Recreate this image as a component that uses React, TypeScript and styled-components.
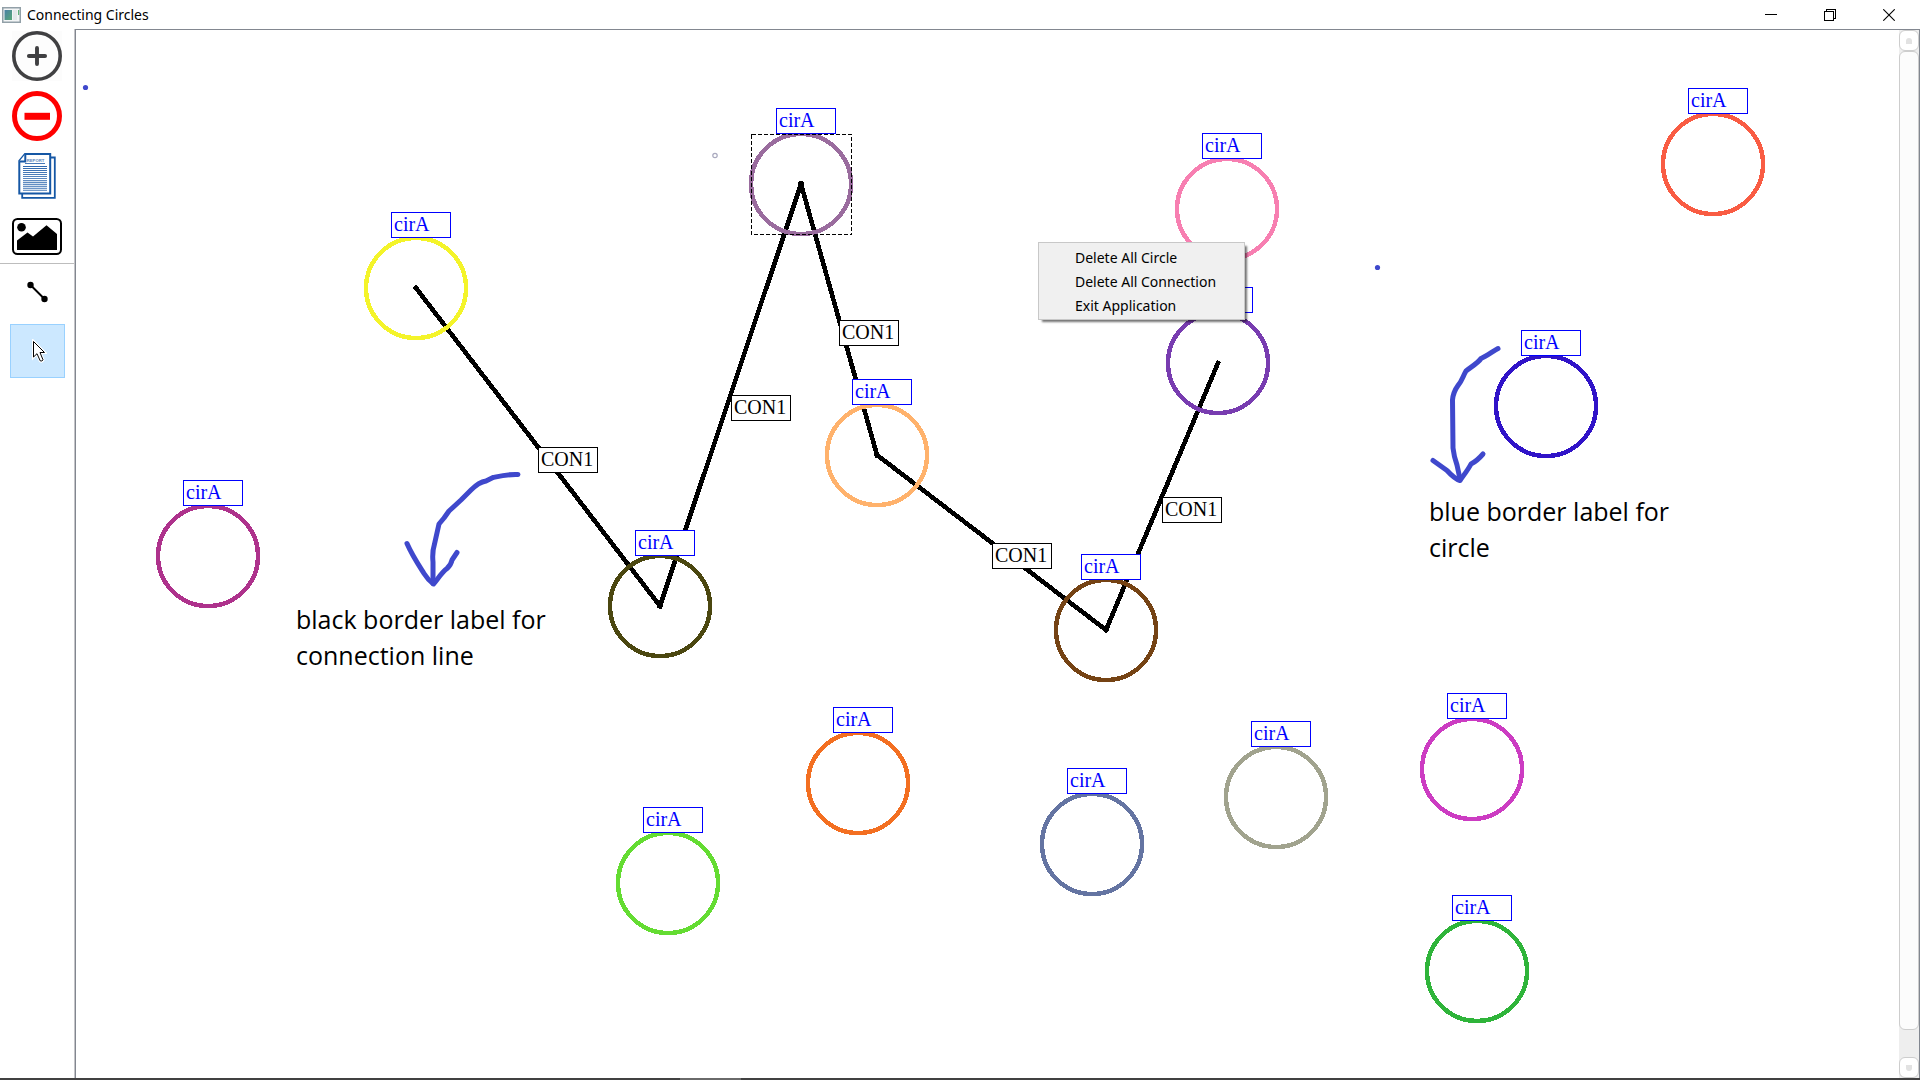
import React from "react";
import styled, { createGlobalStyle } from "styled-components";

const uiFont = `"Segoe UI", "Noto Sans", "Open Sans", sans-serif`;
const noteFont = `"Segoe UI", "Open Sans", "Noto Sans", sans-serif`;

const GlobalStyle = createGlobalStyle`
  * { box-sizing: border-box; }
  body { margin: 0; background: #fff; color: #000; font-family: ${uiFont}; overflow: hidden; }
  button { font: inherit; color: inherit; padding: 0; border: 0; background: none; }
`;

const AppWindow = styled.div`
  display: flex;
  flex-direction: column;
  height: 100vh;
`;

const TitleBar = styled.header`
  display: flex;
  align-items: center;
  height: 29px;
  padding-left: 2px;
  flex: none;
`;

const Title = styled.h1`
  flex: 1;
  margin: 0 0 0 6px;
  font-size: 14px;
  font-weight: 400;
  line-height: 20px;
`;

const WindowButton = styled.button`
  display: grid;
  place-items: center;
  width: 59px;
  height: 28px;
`;

const WindowButtons = styled.div`
  display: flex;
  padding-right: 2px;
`;

const Body = styled.div`
  display: flex;
  flex: 1;
  min-height: 0;
`;

const Toolbar = styled.nav`
  display: flex;
  flex-direction: column;
  width: 75px;
  border-right: 1px solid #c4c4c8;
`;

const ToolGroup = styled.div<{ $divided?: boolean }>`
  display: flex;
  flex-direction: column;
  align-items: center;
  gap: ${(p) => (p.$divided ? 10 : 5)}px;
  padding: ${(p) => (p.$divided ? "2px 0" : "1px 0")};
  border-bottom: ${(p) => (p.$divided ? "1px solid #bdbdbd" : "0")};
`;

const ActionButton = styled.button`
  display: grid;
  place-items: center;
  width: 50px;
  height: 50px;
`;

const ModeButton = styled.button<{ $active?: boolean }>`
  display: grid;
  place-items: center;
  width: 55px;
  height: 54px;
  background: ${(p) => (p.$active ? "#cce8ff" : "transparent")};
  border: 1px solid ${(p) => (p.$active ? "#99d1ff" : "transparent")};
`;

const View = styled.main`
  display: flex;
  flex: 1;
  min-width: 0;
  border: 1px solid #828790;
  border-bottom: 0;
`;

const Scene = styled.div`
  position: relative;
  flex: 1;
  min-width: 0;
  overflow: hidden;
`;

const Drawing = styled.svg`
  position: absolute;
  inset: 0;
  width: 100%;
  height: 100%;
`;

const Label = styled.span<{ $x: number; $y: number; $color: string }>`
  position: absolute;
  left: ${(p) => p.$x}px;
  top: ${(p) => p.$y}px;
  width: 60px;
  height: 26px;
  padding-left: 2px;
  border: 1px solid ${(p) => p.$color};
  background: #fff;
  color: ${(p) => p.$color};
  font: 20px/22px "Liberation Serif", "Times New Roman", serif;
`;

const Note = styled.p<{ $x: number; $y: number }>`
  position: absolute;
  left: ${(p) => p.$x}px;
  top: ${(p) => p.$y}px;
  width: 270px;
  margin: 0;
  font-family: ${noteFont};
  font-size: 25px;
  line-height: 36px;
`;

const Menu = styled.div`
  position: absolute;
  left: 962px;
  top: 212px;
  display: flex;
  flex-direction: column;
  width: 207px;
  padding: 3px 2px 1px;
  background: #f0f0f0;
  border: 1px solid #c8c8c8;
  box-shadow: 3px 3px 2px -1px rgba(0, 0, 0, 0.55);
`;

const MenuItem = styled.button`
  height: 24px;
  padding-left: 34px;
  font-size: 14px;
  line-height: 24px;
  text-align: left;
`;

const ScrollBar = styled.div`
  display: flex;
  flex-direction: column;
  width: 20px;
  background: #eee;
`;

const ScrollButton = styled.button`
  display: grid;
  place-items: center;
  height: 21px;
  border: 1px solid #cdcdcd;
  border-radius: 6px;
  background: #fff;
`;

const ScrollTrack = styled.div`
  flex: 1;
  padding-bottom: 27px;
`;

const ScrollThumb = styled.div`
  height: 100%;
  border: 1px solid #cdcdcd;
  border-radius: 6px;
  background: #fcfcfc;
`;

const Knob = styled.span<{ $down?: boolean }>`
  width: 6px;
  height: 6px;
  border-radius: ${(p) => (p.$down ? "0 0 3px 3px" : "3px 3px 0 0")};
  background: #e2e2e2;
`;

const TaskbarEdge = styled.footer`
  display: flex;
  height: 2px;
  flex: none;
  padding-left: 680px;
  background: #414141;
`;

const TaskbarActive = styled.span`
  width: 61px;
  background: #6a6a6a;
`;

const circles = [
  { x: 340, y: 258, color: "#f4f42a" },
  { x: 725, y: 154, color: "#9a6c9e" },
  { x: 1151, y: 179, color: "#f77fb1" },
  { x: 1142, y: 333, color: "#783cb0" },
  { x: 801, y: 425, color: "#ffb26c" },
  { x: 584, y: 576, color: "#4b4710" },
  { x: 1030, y: 600, color: "#754314" },
  { x: 1470, y: 376, color: "#3013c8" },
  { x: 1637, y: 134, color: "#f95c43" },
  { x: 132, y: 526, color: "#ae328c" },
  { x: 782, y: 753, color: "#f36f21" },
  { x: 592, y: 853, color: "#64dc32" },
  { x: 1016, y: 814, color: "#6474a2" },
  { x: 1200, y: 767, color: "#a1a38e" },
  { x: 1396, y: 739, color: "#cc3cc2" },
  { x: 1401, y: 941, color: "#2fb43a" },
];

const connections = [
  { from: 0, to: 5, x: 462, y: 417 },
  { from: 5, to: 1, x: 655, y: 365 },
  { from: 1, to: 4, x: 763, y: 290 },
  { from: 4, to: 6, x: 916, y: 513 },
  { from: 6, to: 3, x: 1086, y: 467 },
];

const AppIcon = () => (
  <svg width="19" height="16" viewBox="0 0 19 16" aria-hidden="true">
    <defs>
      <linearGradient id="pane" x1="0" y1="0" x2="1" y2="1">
        <stop offset="0" stopColor="#4a80a6" />
        <stop offset="1" stopColor="#57a877" />
      </linearGradient>
    </defs>
    <rect x="0.75" y="0.75" width="17.5" height="14.5" fill="#f3f5f6" stroke="#92a0a8" strokeWidth="1.5" />
    <rect x="2.5" y="3" width="7.5" height="10" fill="url(#pane)" />
    <rect x="11" y="3" width="4" height="10" fill="#e3e8ea" />
    <rect x="16" y="3" width="1.2" height="5" fill="#62b07a" />
  </svg>
);

const AddIcon = () => (
  <svg width="50" height="50" viewBox="0 0 50 50" aria-hidden="true">
    <rect width="50" height="50" fill="#fcfcfc" />
    <circle cx="25" cy="25" r="23.2" fill="#fdfdfd" stroke="#404042" strokeWidth="3.6" />
    <path d="M16.9 25H33.1M25 16.9V33.1" stroke="#404042" strokeWidth="3.9" strokeLinecap="round" />
  </svg>
);

const RemoveIcon = () => (
  <svg width="50" height="50" viewBox="0 0 50 50" aria-hidden="true">
    <circle cx="25" cy="25" r="22.5" fill="#fff" stroke="#f00" strokeWidth="5" />
    <rect x="12.5" y="21.8" width="25.5" height="7" fill="#f00" />
  </svg>
);

const ReportIcon = () => (
  <svg width="50" height="50" viewBox="0 0 50 50" aria-hidden="true">
    <path d="M38 6.5H42.8V46.8H10.2V42" fill="#fff" stroke="#1557a5" strokeWidth="1.8" />
    <path d="M13 3H38.2V42.4H7.3V9.8Z" fill="#fff" stroke="#1557a5" strokeWidth="2" />
    <path d="M13.3 3V10.6H7.2" fill="#fff" stroke="#1557a5" strokeWidth="2" />
    <text x="14.8" y="11" fontFamily="Liberation Sans, Arial, sans-serif" fontSize="4.2" fontWeight="700" fill="#5d86bd">
      REPORT
    </text>
    <path d="M13 12.5H33" stroke="#4779b7" strokeWidth="1" />
    {[15.5, 17.5, 19.5, 21.5, 23.5, 25.5, 27.5, 29.5, 31.5, 33.5, 35.5, 37.5, 39.5].map((y, i) => (
      <path key={y} d={`M11 ${y}H35`} stroke="#2f68ae" strokeWidth="1" opacity={1 - i * 0.035} />
    ))}
    <path d="M11 30H35V40H11Z" fill="#2f68ae" opacity="0.2" />
  </svg>
);

const PictureIcon = () => (
  <svg width="50" height="50" viewBox="0 0 50 50" aria-hidden="true">
    <rect x="1" y="8" width="48" height="35" rx="4.5" fill="#fff" stroke="#000" strokeWidth="2" />
    <circle cx="9.5" cy="16.3" r="4.3" />
    <path d="M5 29.5L15.5 21.5L21 25.5L34.5 14.2L45 23V39H5Z" />
  </svg>
);

const LineIcon = () => (
  <svg width="24" height="24" viewBox="0 0 24 24" aria-hidden="true">
    <path d="M5.5 5L19.5 19" stroke="#000" strokeWidth="2" />
    <circle cx="5.5" cy="5" r="3.2" />
    <circle cx="19.5" cy="19" r="3.2" />
  </svg>
);

const pointerShape = "M6.5 2.500V18L10 14.700L13.200 21.800Q15 22.800 16 20.800L13 13.500H17.500Z";

const PointerIcon = () => (
  <svg width="20" height="24" viewBox="0 0 20 24" aria-hidden="true">
    <path d={pointerShape} fill="#fff" stroke="#fff" strokeWidth="3" />
    <path d={pointerShape} fill="#fff" stroke="#000" strokeWidth="1" />
  </svg>
);

const MinimizeIcon = () => (
  <svg width="12" height="12" viewBox="0 0 12 12" shapeRendering="crispEdges" aria-hidden="true">
    <path d="M0 5.5H12" stroke="#000" />
  </svg>
);

const RestoreIcon = () => (
  <svg width="12" height="12" viewBox="0 0 12 12" fill="none" stroke="#000" shapeRendering="crispEdges" aria-hidden="true">
    <path d="M0.5 2.5H9.5V11.5H0.5ZM2.5 2.5V0.5H11.5V9.5H9.5" />
  </svg>
);

const CloseIcon = () => (
  <svg width="12" height="12" viewBox="0 0 12 12" aria-hidden="true">
    <path d="M0.3 0.3L11.7 11.7M11.7 0.3L0.3 11.7" stroke="#000" strokeWidth="1.1" />
  </svg>
);

const SceneDrawing = () => (
  <Drawing aria-hidden="true">
    <g stroke="#000" strokeWidth="4.6" strokeLinecap="square" shapeRendering="crispEdges">
      {connections.map(({ from, to }) => (
        <line
          key={`${from}-${to}`}
          x1={circles[from].x}
          y1={circles[from].y}
          x2={circles[to].x}
          y2={circles[to].y}
        />
      ))}
    </g>
    <g fill="none" strokeWidth="4.5" shapeRendering="crispEdges">
      {circles.map(({ x, y, color }) => (
        <circle key={color} cx={x} cy={y} r="50" stroke={color} />
      ))}
      <rect x="675.5" y="104.5" width="100" height="100" stroke="#000" strokeWidth="1" strokeDasharray="4 2" />
    </g>
    <g fill="none" stroke="#3f48cc" strokeWidth="5" strokeLinecap="round" strokeLinejoin="round">
      <path d="M442 444.5C432 444 424 446 417 447.5L410 451C404 452 399 456 395 460L385 470L373 481L368 488L363 494Q361 503 358.5 514Q356 522 357 532V553.5" />
      <path d="M331 513.5C336 525 342 534 348 543.5Q352 550 357.5 554C362 549 365 543 371 538.5Q375 535 376 530L381 522.5" />
      <path d="M1422 318.5C1417 321 1411 326 1405 328.5C1402 333 1395 337 1390 341C1387 346 1386 351 1382 355.5C1378 361 1377 364 1376.5 370L1377 418Q1378 427 1381 435L1384 449" />
      <path d="M1357 430.5L1371 440.5C1376 446 1379 449 1384 450.5C1387 446 1392 440 1395 434Q1401 431 1407 424" />
    </g>
    <circle cx="9.5" cy="57.5" r="2.6" fill="#3f48cc" />
    <circle cx="1301.5" cy="237.5" r="2.6" fill="#3f48cc" />
    <circle cx="639" cy="125.5" r="2.2" fill="none" stroke="#a9a9be" strokeWidth="1.2" />
  </Drawing>
);

export default function App() {
  return (
    <AppWindow>
      <GlobalStyle />
      <TitleBar>
        <AppIcon />
        <Title>Connecting Circles</Title>
        <WindowButtons>
          <WindowButton aria-label="Minimize"><MinimizeIcon /></WindowButton>
          <WindowButton aria-label="Restore"><RestoreIcon /></WindowButton>
          <WindowButton aria-label="Close"><CloseIcon /></WindowButton>
        </WindowButtons>
      </TitleBar>
      <Body>
        <Toolbar aria-label="Tools">
          <ToolGroup $divided>
            <ActionButton aria-label="Add circle"><AddIcon /></ActionButton>
            <ActionButton aria-label="Remove circle"><RemoveIcon /></ActionButton>
            <ActionButton aria-label="Report"><ReportIcon /></ActionButton>
            <ActionButton aria-label="Save as image"><PictureIcon /></ActionButton>
          </ToolGroup>
          <ToolGroup>
            <ModeButton aria-label="Draw connection"><LineIcon /></ModeButton>
            <ModeButton aria-label="Select" aria-pressed="true" $active><PointerIcon /></ModeButton>
          </ToolGroup>
        </Toolbar>
        <View>
          <Scene>
            <SceneDrawing />
            {connections.map(({ x, y }) => (
              <Label key={`${x}-${y}`} $x={x} $y={y} $color="#000">CON1</Label>
            ))}
            {circles.map(({ x, y, color }) => (
              <Label key={color} $x={x - 25} $y={y - 76} $color="#0000ff">cirA</Label>
            ))}
            <Note $x={220} $y={571}>black border label for connection line</Note>
            <Note $x={1353} $y={463}>blue border label for circle</Note>
            <Menu role="menu">
              <MenuItem role="menuitem">Delete All Circle</MenuItem>
              <MenuItem role="menuitem">Delete All Connection</MenuItem>
              <MenuItem role="menuitem">Exit Application</MenuItem>
            </Menu>
          </Scene>
          <ScrollBar>
            <ScrollButton aria-label="Scroll up"><Knob /></ScrollButton>
            <ScrollTrack><ScrollThumb /></ScrollTrack>
            <ScrollButton aria-label="Scroll down"><Knob $down /></ScrollButton>
          </ScrollBar>
        </View>
      </Body>
      <TaskbarEdge><TaskbarActive /></TaskbarEdge>
    </AppWindow>
  );
}
